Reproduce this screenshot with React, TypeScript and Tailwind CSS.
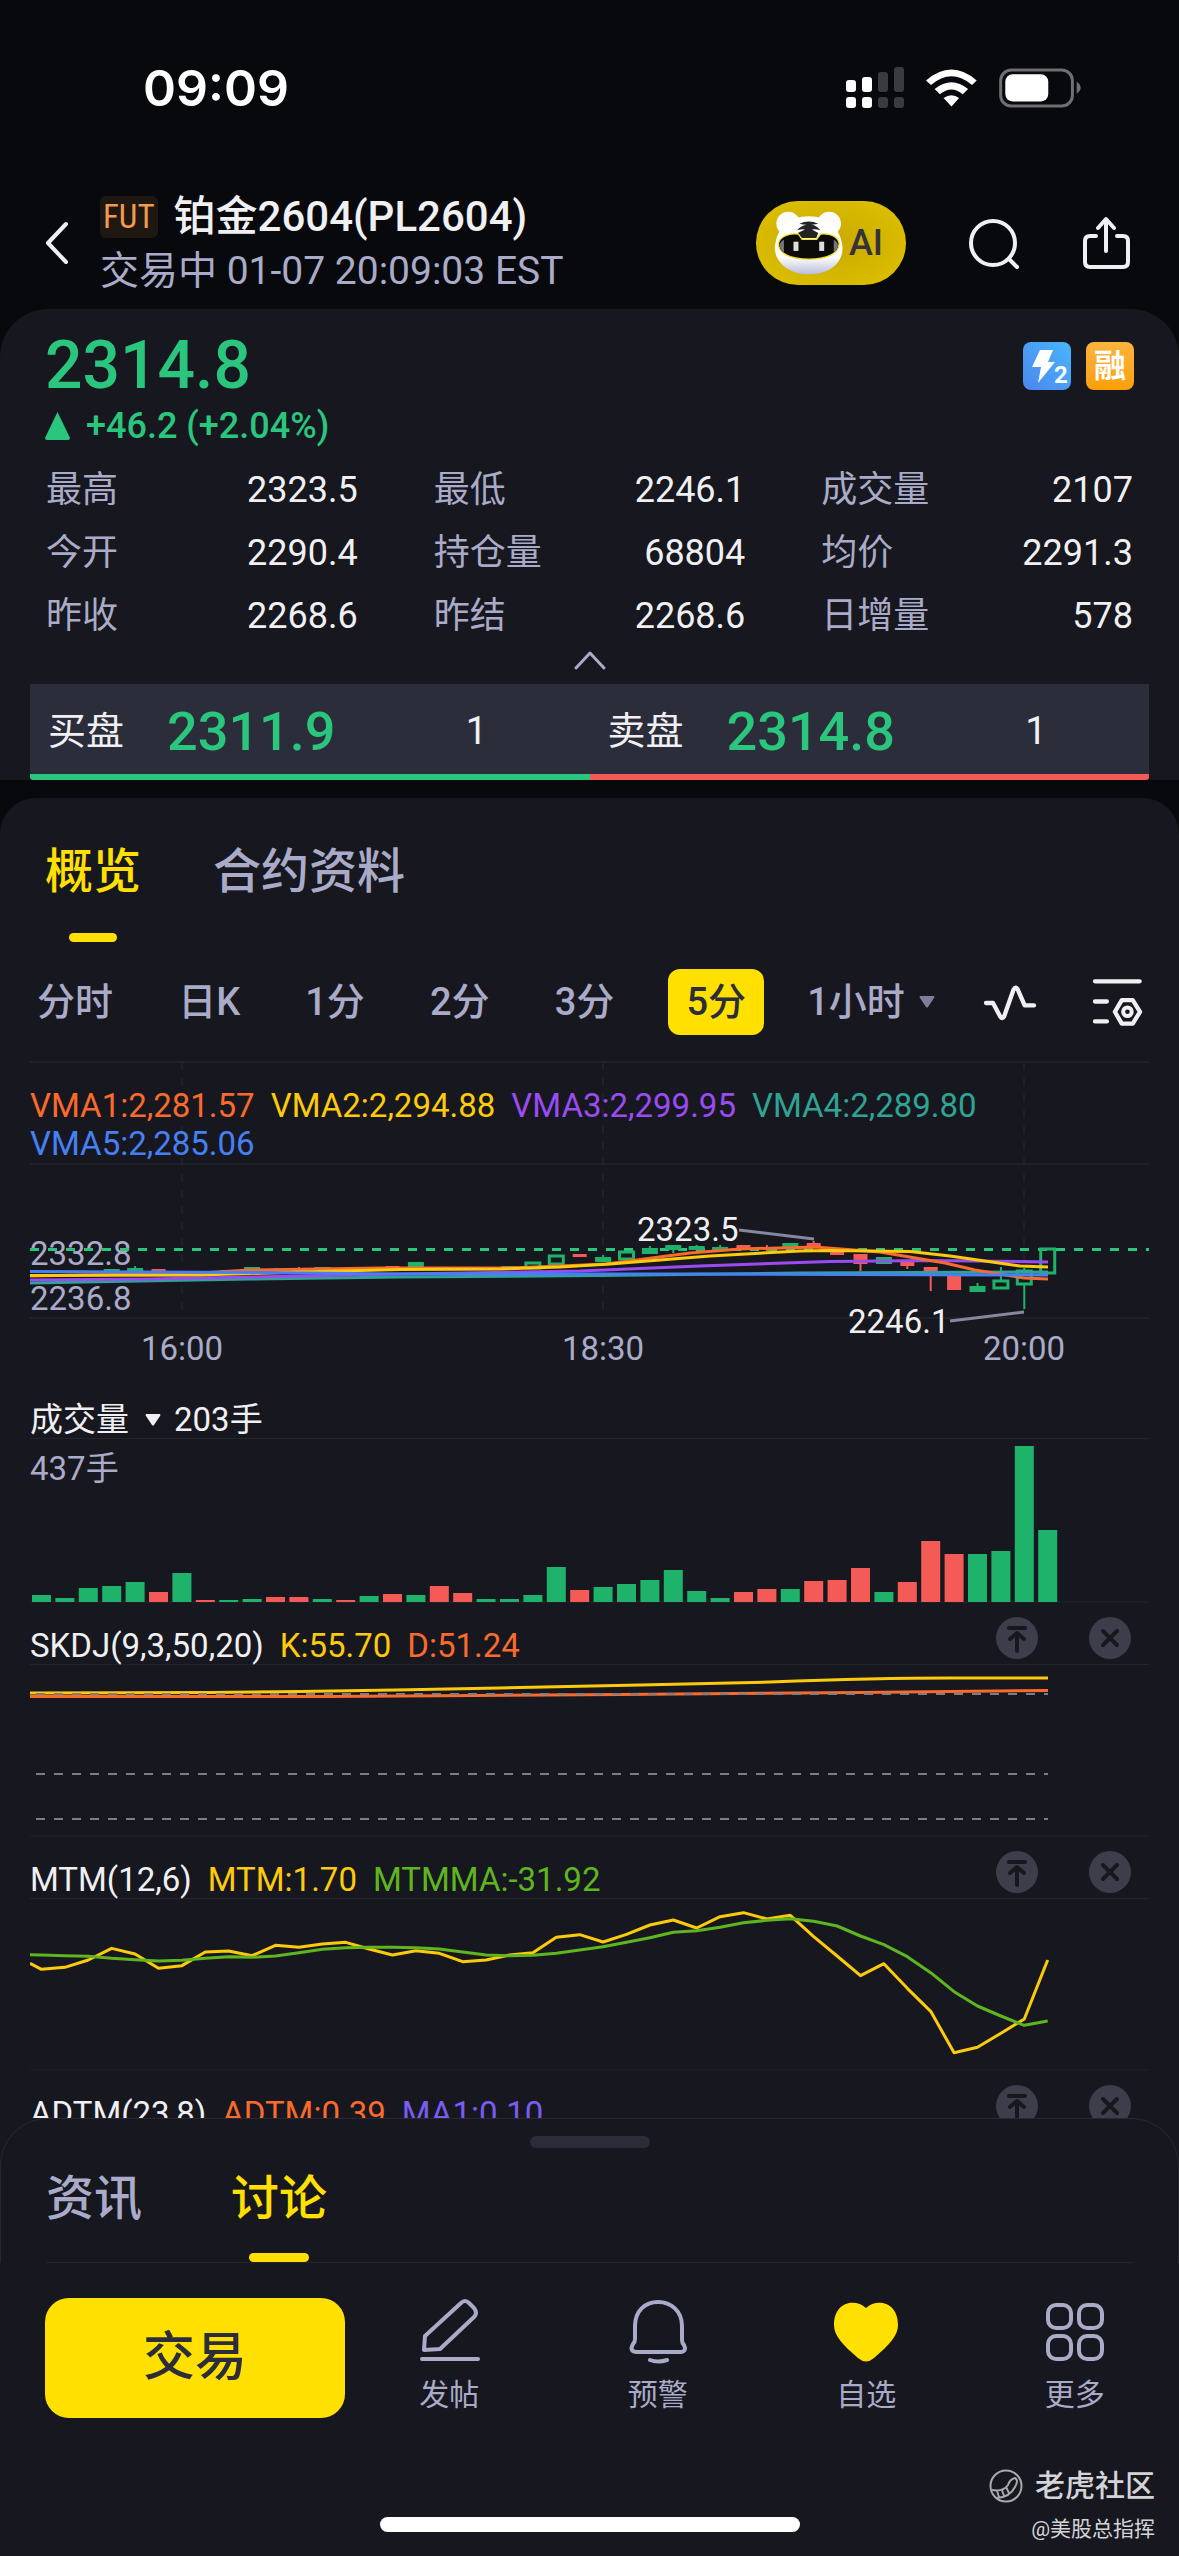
import React, { useState } from "react";

const GREEN = "#1fb26b";
const RED = "#f45b57";

const stats = [
  ["最高", "2323.5"],
  ["最低", "2246.1"],
  ["成交量", "2107"],
  ["今开", "2290.4"],
  ["持仓量", "68804"],
  ["均价", "2291.3"],
  ["昨收", "2268.6"],
  ["昨结", "2268.6"],
  ["日增量", "578"],
];

const averages = [
  { text: "VMA1:2,281.57", tone: "text-[#fa6a2c]" },
  { text: "VMA2:2,294.88", tone: "text-[#fdcb0b]" },
  { text: "VMA3:2,299.95", tone: "text-[#9b4bf2]" },
  { text: "VMA4:2,289.80", tone: "text-[#2fa394]" },
  { text: "VMA5:2,285.06", tone: "text-[#4680f5]" },
];

type Kind = "up" | "down" | "hollow";

// [slot, kind, body top, body bottom, wick top, wick bottom]
const candles: [number, Kind, number, number, number, number][] = [
  [3, "up", 209, 211, 209, 211],
  [4, "up", 208, 211, 206, 211],
  [5, "down", 209, 211, 209, 211],
  [8, "up", 210, 212, 210, 212],
  [9, "up", 207, 211, 207, 211],
  [10, "down", 209, 211, 208, 211],
  [11, "down", 209, 211, 207, 211],
  [12, "up", 207, 210, 207, 210],
  [13, "down", 208, 210, 208, 210],
  [14, "up", 207, 209, 207, 209],
  [15, "down", 206, 208, 206, 208],
  [16, "up", 202, 207, 202, 207],
  [20, "up", 206, 208, 206, 208],
  [21, "hollow", 204, 207, 203, 208],
  [22, "hollow", 197, 203, 195, 204],
  [23, "down", 194, 197, 194, 197],
  [24, "up", 197, 202, 195, 202],
  [25, "hollow", 193, 198, 193, 198],
  [26, "up", 188, 194, 186, 194],
  [27, "up", 185, 190, 185, 193],
  [28, "up", 186, 190, 185, 190],
  [29, "up", 187, 191, 185, 191],
  [30, "down", 185, 189, 185, 189],
  [31, "down", 187, 189, 185, 191],
  [32, "up", 183, 188, 183, 188],
  [33, "down", 183, 188, 181, 188],
  [34, "down", 192, 195, 192, 195],
  [35, "down", 194, 204, 194, 211],
  [36, "up", 197, 204, 197, 204],
  [37, "down", 201, 206, 201, 209],
  [38, "down", 207, 211, 207, 231],
  [39, "down", 215, 230, 215, 230],
  [40, "up", 226, 232, 223, 232],
  [41, "hollow", 222, 227, 207, 227],
  [42, "hollow", 212, 223, 208, 249],
  [43, "hollow", 190, 212, 190, 212],
];

const volumes: [number, boolean][] = [
  [7, true], [4, true], [14, true], [16, true], [20, true], [10, false], [29, true], [2, false],
  [2, true], [3, true], [5, false], [5, false], [3, true], [2, false], [6, true], [8, false],
  [7, true], [16, false], [9, false], [3, true], [3, true], [7, true], [35, true], [12, false],
  [15, true], [18, true], [22, true], [32, true], [11, true], [4, true], [10, false], [13, false],
  [13, true], [21, false], [22, false], [34, false], [10, true], [20, false], [61, false], [48, false],
  [48, true], [51, true], [156, true], [72, true],
];

const mtm = [
  388, 382, 360, 325, 342, 385, 377, 336, 333, 347, 316, 322, 312, 307, 327, 345, 332, 340, 365, 360, 345, 338,
  292, 284, 306, 283, 255, 240, 264, 230, 218, 237, 226, 290, 348, 407, 371, 445, 514, 638, 622, 580, 537, 360,
];
const mtmMa = [
  345, 347, 349, 355, 359, 363, 361, 355, 350, 352, 348, 338, 328, 323, 322, 322, 323, 327, 336, 345, 347, 346,
  340, 330, 320, 307, 293, 277, 272, 262, 248, 241, 236, 244, 258, 288, 314, 350, 398, 455, 498, 528, 556, 543,
];

const slotX = (i: number) => 11.5 + 23.4 * i;
const trace = (first: number, values: number[]) =>
  [`0,${first / 3 - 59}`, ...values.map((v, i) => `${slotX(i)},${v / 3 - 59}`)].join(" ");

function StatusIcons() {
  return (
    <div className="flex items-center">
      <svg viewBox="0 0 58 42" className="h-[42px] w-[58px]">
        <g fill="#fff">
          <rect x="0" y="13" width="10" height="12" rx="3" />
          <rect x="16" y="10" width="10" height="15" rx="3" />
          <rect x="0" y="30" width="10" height="11" rx="3" />
          <rect x="16" y="30" width="10" height="11" rx="3" />
        </g>
        <g fill="#3a3b3e">
          <rect x="32" y="5" width="10" height="20" rx="3" />
          <rect x="48" y="0" width="10" height="25" rx="3" />
          <rect x="32" y="30" width="10" height="11" rx="3" />
          <rect x="48" y="30" width="10" height="11" rx="3" />
        </g>
      </svg>
      <svg viewBox="288 55 154 114" className="ml-[22px] h-[38px] w-[51px]" fill="#fff">
        <path d="M288 89 Q365 23 441 89 L427 103 Q365 50 303 103 Z" />
        <path d="M314 115 Q365 74 415 115 L399 131 Q365 102 330 131 Z" />
        <path d="M341 142 Q365 126 388 142 L365 168 Z" />
      </svg>
      <svg viewBox="506 53 248 119" className="ml-[22px] h-[40px] w-[82px]">
        <rect x="511" y="58" width="217" height="109" rx="32" fill="none" stroke="#6e6f72" strokeWidth="9" />
        <rect x="525" y="71" width="130" height="82" rx="22" fill="#fff" />
        <path d="M741 93 Q765 112 741 130 Z" fill="#6e6f72" />
      </svg>
    </div>
  );
}

function TigerIcon() {
  return (
    <svg viewBox="160 96 212 194" className="h-[64px] w-[70px]">
      <defs>
        <linearGradient id="fur" x1="0" y1="0" x2="0" y2="1">
          <stop offset="0.7" stopColor="#fff" />
          <stop offset="1" stopColor="#b9bddb" />
        </linearGradient>
      </defs>
      <circle cx="203" cy="134" r="36" fill="#fbfbfb" />
      <circle cx="327" cy="134" r="36" fill="#fbfbfb" />
      <path d="M265 112 C325 112 358 150 365 190 C378 235 345 288 266 288 C190 288 152 235 165 190 C172 150 205 112 265 112Z" fill="url(#fur)" />
      <path d="M237 135 Q265 120 294 135 Q280 138 272 136 Q292 142 300 154 Q285 150 275 152 L294 163 L288 178 L243 178 L232 163 L254 152 Q245 150 230 154 Q240 142 258 138 Q248 138 237 135Z" fill="#242424" />
      <path d="M174 192 C180 170 210 163 234 166 L245 182 L289 182 L301 166 C330 163 352 172 357 192 C360 222 325 242 266 242 C205 242 170 222 174 192Z" fill="#0d0b0a" stroke="#f4e21d" strokeWidth="4" />
      <path d="M190 184 Q178 188 177 202 Q179 214 190 222Z" fill="#77757b" />
      <path d="M341 184 Q353 188 354 202 Q352 214 341 222Z" fill="#77757b" />
      <rect x="219" y="189" width="15" height="28" fill="#dedede" />
      <rect x="297" y="189" width="15" height="28" fill="#dedede" />
    </svg>
  );
}

function PaneButtons({ name }: { name: string }) {
  return (
    <div className="mr-[18px] mb-[5px] ml-auto flex gap-[51px]">
      <button aria-label={`${name} 置顶`} className="size-[42px] rounded-full bg-[#3d3d4b]">
        <svg viewBox="0 0 42 42" fill="none" stroke="#17181f" strokeWidth="4" strokeLinecap="round" strokeLinejoin="round">
          <path d="M13 11H29M21 34V17M14 22L21 16L28 22" />
        </svg>
      </button>
      <button aria-label={`${name} 关闭`} className="size-[42px] rounded-full bg-[#3d3d4b]">
        <svg viewBox="0 0 42 42" fill="none" stroke="#17181f" strokeWidth="4" strokeLinecap="round">
          <path d="M14 14L28 28M28 14L14 28" />
        </svg>
      </button>
    </div>
  );
}

function PaneHeader({ title, values }: { title: string; values: { text: string; tone: string }[] }) {
  return (
    <div className="flex h-[62px] items-end border-b border-[#23242c] text-[33px] leading-[36px]">
      <div className="flex gap-[16px]">
        <span className="text-[#f0f0f2]">{title}</span>
        {values.map((v) => (
          <span key={v.text} className={v.tone}>
            {v.text}
          </span>
        ))}
      </div>
      <PaneButtons name={title} />
    </div>
  );
}

function PriceChart() {
  return (
    <div className="relative">
      <svg viewBox="0 1 1119 338" className="block w-full" fontSize="33" fill="none">
        <g stroke="#23242c" strokeWidth="1.500">
          <path d="M0 2H1119M0 104H1119M0 258H1119" />
          <path d="M152 2V258M573 2V258M994 2V258" strokeDasharray="8 8" />
        </g>
        <g fill="#a9abc8">
          <text x="0" y="205">2332.8</text>
          <text x="0" y="250">2236.8</text>
          <g textAnchor="middle">
            <text x="152" y="300">16:00</text>
            <text x="573" y="300">18:30</text>
            <text x="994" y="300">20:00</text>
          </g>
        </g>
        <path d="M0 189.500H1119" stroke="#2bc67d" strokeWidth="3" strokeDasharray="9 9" />
        {candles.map(([slot, kind, top, bottom, high, low]) => {
          const color = kind === "down" ? RED : GREEN;
          const half = kind === "down" ? 7 : 8;
          return (
            <g key={slot} stroke={color} strokeWidth="2">
              {kind === "hollow" ? (
                <>
                  <path d={`M${slotX(slot)} ${high}V${top}M${slotX(slot)} ${bottom}V${low}`} />
                  <rect x={slotX(slot) - 7} y={top - 1} width="14" height={bottom - top + 2} strokeWidth="3" />
                </>
              ) : (
                <>
                  <path d={`M${slotX(slot)} ${high}V${low}`} />
                  <rect x={slotX(slot) - half} y={top} width={half * 2} height={bottom - top} fill={color} stroke="none" />
                </>
              )}
            </g>
          );
        })}
        <g strokeWidth="3" strokeLinejoin="round">
          <path stroke="#2fa394" d="M0 223L220 219L370 217L570 215.500L770 213L1018 212" />
          <path stroke="#9b4bf2" d="M0 220L120 219L220 217L370 214L550 211L670 206L800 201.500L900 200.500L1018 202" />
          <path stroke="#fa6a2c" d="M0 216L170 213L220 210L350 208L480 208L530 206L576 204L660 193L710 189L785 187L850 192L915 203L945 210L994 218L1018 219" />
          <path stroke="#fdcb0b" d="M0 215.500L170 215L270 212L370 209.500L470 209L530 207L580 204L680 196L770 191L800 190.500L880 191.500L920 196L990 206L1018 207" />
          <path stroke="#4680f5" d="M0 211.500L220 212.500L370 214L670 214L1018 215" />
        </g>
        <path d="M709 170L784 179M920 261L994 252" stroke="#8587a0" strokeWidth="3" />
        <g fill="#f0f0f2">
          <text x="607" y="181">2323.5</text>
          <text x="818" y="273">2246.1</text>
        </g>
      </svg>
      <div className="absolute inset-x-0 top-[26px] flex flex-wrap gap-x-[16px] text-[33px] leading-[38px]">
        {averages.map((a) => (
          <span key={a.text} className={a.tone}>
            {a.text}
          </span>
        ))}
      </div>
    </div>
  );
}

function Quote({ label, price, size }: { label: string; price: string; size: string }) {
  return (
    <div className="flex flex-1 items-center pt-[4px] pl-[18px]">
      <span className="text-[38px] text-[#f0f0f2]">{label}</span>
      <span className="ml-[43px] text-[54px] font-medium text-[#2bc67d]">{price}</span>
      <span className="mx-auto pl-[28px] text-[38px] text-[#f0f0f2]">{size}</span>
    </div>
  );
}

const periods = ["分时", "日K", "1分", "2分", "3分", "5分"];

const actions = [
  {
    label: "发帖",
    icon: (
      <svg viewBox="0 0 66 66" className="size-[66px]" fill="none" stroke="#a9abc8" strokeWidth="4" strokeLinecap="round" strokeLinejoin="round">
        <path d="M8 52L9 38L45 5Q49 1 53 5L58 10Q62 15 58 19L24 51Z M6 61H62" />
      </svg>
    ),
  },
  {
    label: "预警",
    icon: (
      <svg viewBox="0 0 66 66" className="size-[66px]" fill="none" stroke="#a9abc8" strokeWidth="4" strokeLinecap="round" strokeLinejoin="round">
        <path d="M10 28C10 13 20 4 33 4S57 13 57 28V42Q57 45 59 47Q62 53 56 54H11Q4 53 8 46Q10 44 10 41Z" />
        <path d="M25 62Q33 65 42 62" />
      </svg>
    ),
  },
  {
    label: "自选",
    icon: (
      <svg viewBox="0 0 66 66" className="size-[66px]" fill="#ffe000">
        <path d="M33 10C44 0 65 4 65 27C65 38 56 47 41 60Q33 67 25 60C10 47 1 38 1 27C1 4 22 0 33 10Z" />
      </svg>
    ),
  },
  {
    label: "更多",
    icon: (
      <svg viewBox="0 0 66 66" className="size-[66px]" fill="none" stroke="#a9abc8" strokeWidth="4">
        <rect x="6" y="7" width="23" height="23" rx="8" />
        <rect x="37" y="7" width="23" height="23" rx="8" />
        <rect x="6" y="38" width="23" height="23" rx="8" />
        <rect x="37" y="38" width="23" height="23" rx="8" />
      </svg>
    ),
  },
];

export default function App() {
  const [period, setPeriod] = useState("5分");

  return (
    <div className="w-full overflow-hidden bg-[#07090c] font-['Roboto','Noto_Sans_CJK_SC',sans-serif] text-[#a9abc8]">
      <div className="flex h-[176px] items-center justify-between pr-[98px] pl-[143px]">
        <span className="font-['Inter',sans-serif] text-[50px] font-semibold text-white">09:09</span>
        <StatusIcons />
      </div>

      <header className="flex h-[133px] items-center pr-[46px] pl-[44px]">
        <button aria-label="返回" className="w-[56px]">
          <svg viewBox="0 0 28 46" className="h-[46px] w-[28px]" fill="none" stroke="#f0f0f2" strokeWidth="4" strokeLinecap="round" strokeLinejoin="round">
            <path d="M22 4L4 23L22 42" />
          </svg>
        </button>
        <div className="pt-[2px] leading-[54px]">
          <div className="flex items-center gap-[16px]">
            <span className="rounded-[6px] bg-[#1f1712] px-[3px] font-['Roboto_Condensed','Roboto',sans-serif] text-[33px] leading-[42px] text-[#f49a4f]">FUT</span>
            <h1 className="text-[42px] font-medium text-[#f0f0f2]">铂金2604(PL2604)</h1>
          </div>
          <p className="text-[39px]">交易中 01-07 20:09:03 EST</p>
        </div>
        <button className="ml-auto flex h-[84px] w-[150px] items-center gap-[5px] rounded-full bg-radial from-[#c9a800] to-[#dfc300] pl-[18px] text-[36px] font-medium text-[#33333b]">
          <TigerIcon />
          AI
        </button>
        <button aria-label="搜索" className="ml-[60px]">
          <svg viewBox="0 0 54 54" className="size-[54px]" fill="none" stroke="#f0f0f2" strokeWidth="4" strokeLinecap="round">
            <circle cx="27" cy="27" r="22" />
            <path d="M43 43L51 51" />
          </svg>
        </button>
        <button aria-label="分享" className="ml-[59px]">
          <svg viewBox="0 0 54 54" className="size-[54px]" fill="none" stroke="#f0f0f2" strokeWidth="4" strokeLinecap="round" strokeLinejoin="round">
            <path d="M17 20H11Q6 20 6 25V46Q6 51 11 51H44Q49 51 49 46V25Q49 20 44 20H38M27 35V4M19 12L27 3L35 12" />
          </svg>
        </button>
      </header>

      <section className="rounded-t-[48px] bg-[#17181f] pt-[24px]">
        <div className="flex items-start justify-between px-[45px]">
          <div className="text-[#2bc67d]">
            <p className="text-[66px] leading-[66px] font-medium">2314.8</p>
            <p className="mt-[5px] flex items-center gap-[16px] text-[36px] leading-[44px] font-medium">
              <svg viewBox="0 0 25 28" className="h-[28px] w-[25px]" fill="currentColor">
                <path d="M12.500 0L25 26Q25 28 23 28H2Q0 28 0 26Z" />
              </svg>
              +46.2 (+2.04%)
            </p>
          </div>
          <div className="mt-[9px] flex gap-[15px]">
            <svg viewBox="0 0 48 48" className="size-[48px] rounded-[8px] bg-linear-to-bl from-[#48b6fb] to-[#4b86ee]" fill="#fff">
              <path d="M17 8H30L25 20H32L15 41L18 25H9Z" />
              <text x="31" y="41" fontSize="24" fontWeight="700">2</text>
            </svg>
            <span className="flex size-[48px] items-center justify-center rounded-[8px] bg-linear-to-b from-[#fbb43c] to-[#fb9f00] text-[32px] font-bold text-white">融</span>
          </div>
        </div>

        <dl className="mt-[11px] grid grid-cols-3 gap-x-[76px] px-[46px] text-[36px] leading-[63px]">
          {stats.map(([label, value]) => (
            <div key={label} className="flex justify-between">
              <dt>{label}</dt>
              <dd className="text-[#f0f0f2]">{value}</dd>
            </div>
          ))}
        </dl>

        <button aria-label="收起" className="mx-auto block h-[36px] pb-[12px]">
          <svg viewBox="0 0 34 22" className="h-[22px] w-[34px]" fill="none" stroke="#a9abc8" strokeWidth="3" strokeLinecap="round" strokeLinejoin="round">
            <path d="M3 19L17 4L31 19" />
          </svg>
        </button>

        <div className="mx-[30px]">
          <div className="flex h-[90px] bg-[#2c2d3b]">
            <Quote label="买盘" price="2311.9" size="1" />
            <Quote label="卖盘" price="2314.8" size="1" />
          </div>
          <div className="flex h-[6px] overflow-hidden rounded-b-[3px]">
            <div className="flex-1 bg-[#2bc67d]" />
            <div className="flex-1 bg-[#f45b57]" />
          </div>
        </div>
      </section>

      <section className="mt-[18px] rounded-t-[36px] bg-[#17181f] pt-[44px]">
        <nav className="flex gap-[72px] px-[45px] text-[48px] leading-[60px] font-medium">
          <button className="flex flex-col items-center text-[#ffe000]">
            概览
            <span className="mt-[31px] h-[9px] w-[48px] rounded-full bg-[#ffe000]" />
          </button>
          <button className="self-start">合约资料</button>
        </nav>

        <div className="mt-[27px] flex items-center justify-between pr-[36px] pl-[26px] text-[38px] font-medium">
          {periods.map((p) => (
            <button
              key={p}
              onClick={() => setPeriod(p)}
              className={p === period ? "h-[66px] rounded-[12px] bg-[#ffe000] px-[18px] text-[#2c2d3b]" : "h-[66px] px-[11px]"}
            >
              {p}
            </button>
          ))}
          <button className="flex items-center gap-[14px] pr-[5px]">
            1小时
            <svg viewBox="0 0 16 12" className="h-[12px] w-[16px]" fill="#7d7f98">
              <path d="M1 0H15Q16 1 15 2L9 11Q8 12 7 11L1 2Q0 1 1 0Z" />
            </svg>
          </button>
          <button aria-label="指标" className="pr-[12px]">
            <svg viewBox="42 70 162 120" className="h-[40px] w-[54px]" fill="none" stroke="#f0f0f2" strokeWidth="13" strokeLinecap="round" strokeLinejoin="round">
              <path d="M51 133H72L94 174Q100 182 105 174L134 92Q140 82 146 92L167 140H195" />
            </svg>
          </button>
          <button aria-label="图表设置">
            <svg viewBox="366 60 154 146" className="h-[49px] w-[51px]" fill="none" stroke="#f0f0f2" strokeWidth="13" strokeLinecap="round" strokeLinejoin="round">
              <path d="M375 69H510M375 130H411M375 190H411M456 126H489L511 161L489 197H456L435 161Z" />
              <circle cx="473" cy="161" r="13" strokeWidth="12" />
            </svg>
          </button>
        </div>

        <div className="mx-[30px] mt-[26px]">
          <PriceChart />

          <div className="flex h-[40px] items-center gap-[13px] border-b border-[#23242c] pt-[3px] text-[33px] leading-[40px] text-[#f0f0f2]">
            <button className="flex items-center gap-[16px]">
              成交量
              <svg viewBox="0 0 16 12" className="h-[12px] w-[16px]" fill="#f0f0f2">
                <path d="M1 0H15Q16 1 15 2L9 11Q8 12 7 11L1 2Q0 1 1 0Z" />
              </svg>
            </button>
            <span>203手</span>
          </div>
          <svg viewBox="0 0 1119 164" className="block w-full">
            <text x="0" y="41" fontSize="33" fill="#a9abc8">437手</text>
            <path d="M0 163H1119" stroke="#23242c" />
            {volumes.map(([height, up], i) => (
              <rect key={i} x={slotX(i) - 9.5} y={163 - height} width="19" height={height} fill={up ? GREEN : RED} />
            ))}
          </svg>

          <PaneHeader
            title="SKDJ(9,3,50,20)"
            values={[
              { text: "K:55.70", tone: "text-[#fdcb0b]" },
              { text: "D:51.24", tone: "text-[#fa6a2c]" },
            ]}
          />
          <svg viewBox="0 0 1119 172" className="block w-full" fill="none">
            <path d="M0 171H1119" stroke="#1f2028" />
            <g strokeWidth="3">
              <path stroke="#fdcb0b" d="M0 28L180 27.500L270 26.500L365 25L470 23L610 20L740 17C820 14 860 13 920 13H1018" />
              <path stroke="#fa6a2c" d="M0 31.500L300 31.500L590 29.500L830 27.500L1018 25.500" />
            </g>
            <path d="M6 29H1018M6 109H1018M6 154H1018" stroke="#7c7d85" strokeWidth="2" strokeDasharray="9 9" />
          </svg>

          <PaneHeader
            title="MTM(12,6)"
            values={[
              { text: "MTM:1.70", tone: "text-[#fdcb0b]" },
              { text: "MTMMA:-31.92", tone: "text-[#5fb51f]" },
            ]}
          />
          <svg viewBox="0 0 1119 172" className="block w-full" fill="none" strokeWidth="3" strokeLinejoin="round">
            <path d="M0 171H1119" stroke="#1f2028" strokeWidth="1" />
            <polyline stroke="#fdcb0b" points={trace(370, mtm)} />
            <polyline stroke="#5fb51f" points={trace(344, mtmMa)} />
          </svg>

          <PaneHeader
            title="ADTM(23,8)"
            values={[
              { text: "ADTM:0.39", tone: "text-[#fa6a2c]" },
              { text: "MA1:0.10", tone: "text-[#7a5cf0]" },
            ]}
          />
        </div>
      </section>

      <section className="relative -mt-[15px] bg-[#17181f]">
        <div className="rounded-t-[48px] border-x border-t border-[#272832] pt-[17px]">
          <div className="mx-auto h-[12px] w-[120px] rounded-full bg-[#2c2c39]" />
          <nav className="mx-[45px] mt-[21px] flex gap-[89px] border-b border-[#23242c] text-[48px] leading-[60px] font-medium">
            <button className="self-start">资讯</button>
            <button className="flex flex-col items-center text-[#ffe000]">
              讨论
              <span className="mt-[24px] h-[9px] w-[60px] rounded-full bg-[#ffe000]" />
            </button>
          </nav>
        </div>

        <div className="flex items-start pt-[35px] pl-[45px]">
          <button className="h-[120px] w-[300px] rounded-[24px] bg-[#ffe000] text-[52px] font-medium text-[#2c2d3b]">交易</button>
          <div className="grid flex-1 grid-cols-4">
            {actions.map((a) => (
              <button key={a.label} className="flex flex-col items-center gap-[11px] text-[30px] leading-[40px]">
                {a.icon}
                {a.label}
              </button>
            ))}
          </div>
        </div>

        <footer className="relative flex h-[138px] items-end justify-center pb-[24px]">
          <div className="h-[15px] w-[420px] rounded-full bg-white" />
          <div className="absolute right-[24px] bottom-[12px] flex flex-col items-end text-[#d4d4d8]">
            <div className="flex items-center gap-[12px] text-[30px] leading-[44px] font-medium">
              <svg viewBox="0 0 34 34" className="size-[34px]" fill="none" stroke="#a8a8ad" strokeWidth="2">
                <circle cx="17" cy="17" r="15.500" />
                <path d="M3 21Q14 23 19 16Q21 10 26 9Q30 11 26 18Q21 28 8 29M8 22L10 28M13 21L15 27M17 18L20 24" />
              </svg>
              老虎社区
            </div>
            <div className="mt-[6px] text-[21px] leading-[30px]">@美股总指挥</div>
          </div>
        </footer>
      </section>
    </div>
  );
}
